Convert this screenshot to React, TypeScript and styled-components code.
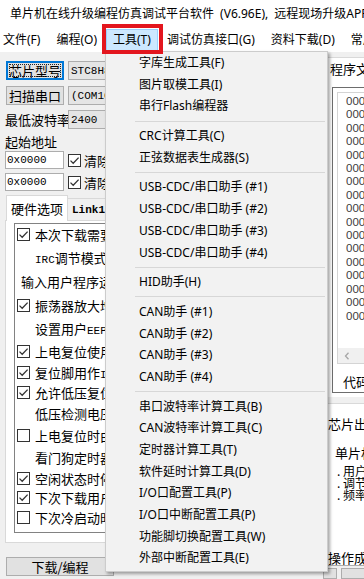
import React from "react";
import styled, { createGlobalStyle, css } from "styled-components";

const GlobalStyle = createGlobalStyle`
  html, body { margin: 0; padding: 0; }
  body { background: #f0f0f0; }
  * { box-sizing: border-box; }
`;

const UI_FONT = `"Noto Sans", "Noto Sans CJK SC", sans-serif`;
const CJK_FONT = `"Noto Sans CJK SC", "Noto Sans", sans-serif`;
const MONO_FONT = `"Liberation Mono", "Noto Sans CJK SC", monospace`;

const Window = styled.div`
  position: relative;
  width: 364px;
  height: 579px;
  overflow: hidden;
  background: #f0f0f0;
  color: #000;
  font-family: ${UI_FONT};
`;

// 标题栏
const TitleBar = styled.div`
  height: 25px;
  background: #fff;
  display: flex;
  align-items: center;
  gap: 7px;
  padding-left: 3px;
  font-size: 12px;
  white-space: nowrap;
`;

const TitleText = styled.span`
  word-spacing: 3px;
`;

// 菜单栏
const MenuBar = styled.div`
  height: 27px;
  background: #fff;
  display: flex;
  align-items: flex-start;
  padding-top: 4px;
  font-size: 12px;
  white-space: nowrap;
`;

const MenuItem = styled.div<{ $active?: boolean }>`
  position: relative;
  height: 22px;
  line-height: 20px;
  padding: 0 7px;
  border: 1px solid transparent;
  &:first-child {
    margin-left: -5px;
  }
  ${(p) =>
    p.$active &&
    css`
      background: #cce8ff;
      border-color: #99d1ff;
      padding: 0 6px;
      margin: 0 1px;
    `}
`;

const RedMark = styled.div`
  position: absolute;
  left: -5px;
  right: -6px;
  top: -6px;
  bottom: -4px;
  border: 4px solid #e3161e;
  z-index: 20;
`;

// 下拉菜单
const Dropdown = styled.div`
  position: absolute;
  left: 105px;
  top: 51px;
  width: 223px;
  padding-bottom: 2px;
  background: #f2f2f2;
  border: 1px solid #cccccc;
  box-shadow: 2px 2px 3px rgba(0, 0, 0, 0.35);
  z-index: 10;
  font-size: 12px;
  font-family: ${UI_FONT};
  white-space: nowrap;
`;

const DropItem = styled.div`
  height: 21.7px;
  line-height: 21.7px;
  padding-left: 33px;
`;

const DropSep = styled.div`
  height: 8px;
  display: flex;
  align-items: center;
  padding: 0 2px 0 29px;
  &::after {
    content: "";
    flex: 1;
    height: 1px;
    background: #d7d7d7;
  }
`;

const Body = styled.div`
  display: flex;
  height: 527px;
`;

// 左侧面板
const LeftPanel = styled.div`
  width: 323px;
  flex-shrink: 0;
  padding-left: 5px;
  overflow: hidden;
  white-space: nowrap;
  font-size: 13px;
  font-family: ${CJK_FONT};
  display: flex;
  flex-direction: column;
`;

const FormRow = styled.div<{ $mt: number; $h?: number }>`
  display: flex;
  align-items: center;
  gap: 4px;
  height: ${(p) => p.$h ?? 19}px;
  margin-top: ${(p) => p.$mt}px;
  flex-shrink: 0;
`;

const PushButton = styled.div<{ $w: number; $focus?: boolean }>`
  width: ${(p) => p.$w}px;
  height: 100%;
  flex-shrink: 0;
  margin-left: 1px;
  display: flex;
  align-items: center;
  justify-content: center;
  background: #e1e1e1;
  border: 1px solid #adadad;
  font-size: 13px;
  line-height: 1;
  ${(p) =>
    p.$focus &&
    css`
      border-color: #0078d7;
      box-shadow: inset 0 0 0 1px #0078d7;
      outline: 1px dotted #222;
      outline-offset: -4px;
    `}
`;

const Combo = styled.div`
  width: 230px;
  height: 100%;
  flex-shrink: 0;
  display: flex;
  align-items: center;
  padding-left: 2px;
  background: #e5e5e5;
  border: 1px solid #adadad;
  font-family: ${MONO_FONT};
  font-size: 11px;
`;

const FieldLabel = styled.div<{ $w?: number }>`
  width: ${(p) => (p.$w ? `${p.$w}px` : "auto")};
  flex-shrink: 0;
  line-height: 18px;
`;

const BlockLabel = styled.div`
  height: 18px;
  line-height: 18px;
  margin-top: 4px;
  flex-shrink: 0;
`;

const TextInput = styled.div`
  width: 59px;
  height: 100%;
  flex-shrink: 0;
  display: flex;
  align-items: center;
  padding-left: 1px;
  background: #fff;
  border: 1px solid #adadad;
  font-family: ${MONO_FONT};
  font-size: 11px;
`;

const CheckWrap = styled.span`
  display: inline-flex;
  align-items: center;
  gap: 3px;
`;

const CheckBox = styled.span`
  width: 13px;
  height: 13px;
  flex-shrink: 0;
  display: inline-flex;
  align-items: center;
  justify-content: center;
  background: #fff;
  border: 1px solid #333;
`;

const Ascii = styled.span`
  font-family: ${MONO_FONT};
  font-size: 11px;
`;

const TabStrip = styled.div`
  height: 25px;
  margin-top: 4px;
  display: flex;
  align-items: flex-end;
  flex-shrink: 0;
`;

const Tab = styled.div<{ $selected?: boolean }>`
  position: relative;
  display: flex;
  align-items: center;
  justify-content: center;
  border: 1px solid #d9d9d9;
  border-bottom: none;
  ${(p) =>
    p.$selected
      ? css`
          width: 62px;
          height: 26px;
          margin: 0 0 -1px 1px;
          background: #fff;
          z-index: 1;
        `
      : css`
          height: 22px;
          padding: 0 4px;
          margin-left: -1px;
          background: #f0f0f0;
          font-family: ${MONO_FONT};
          font-weight: bold;
          font-size: 11px;
        `}
`;

const TabPage = styled.div`
  width: 330px;
  height: 323px;
  flex-shrink: 0;
  padding: 2px 0 0 8px;
  background: #fff;
  border: 1px solid #d9d9d9;
`;

const OptionList = styled.div`
  width: 330px;
  height: 310px;
  padding-left: 2px;
  display: flex;
  flex-direction: column;
  border: 1px solid #828282;
  background: #fff;
`;

const OptionRow = styled.div<{ $h: number; $indent: number }>`
  height: ${(p) => p.$h}px;
  flex-shrink: 0;
  display: flex;
  align-items: center;
  gap: 5px;
  padding-left: ${(p) => p.$indent}px;
`;

// 右侧面板
const RightPanel = styled.div`
  flex: 1;
  min-width: 0;
  overflow: hidden;
  white-space: nowrap;
  padding-top: 5px;
  display: flex;
  flex-direction: column;
  font-family: ${CJK_FONT};
  font-size: 13px;
`;

const RTabStrip = styled.div`
  height: 23px;
  padding-left: 3px;
  display: flex;
  align-items: flex-end;
  flex-shrink: 0;
`;

const RTab = styled.div`
  position: relative;
  z-index: 1;
  width: 80px;
  height: 24px;
  margin-bottom: -1px;
  padding-left: 3px;
  line-height: 22px;
  background: #fff;
  border: 1px solid #d9d9d9;
  border-bottom: none;
`;

const RTabPage = styled.div`
  height: 317px;
  margin-left: 3px;
  padding: 6px 0 0 5px;
  flex-shrink: 0;
  background: #fff;
  border-top: 1px solid #d9d9d9;
  border-left: 1px solid #d9d9d9;
`;

const OuterFrame = styled.div`
  height: 306px;
  padding: 4px 0 0 4px;
  background: #fff;
  border: 1px solid #6d6d6d;
  border-right: none;
`;

const HexList = styled.div`
  height: 272px;
  display: flex;
  flex-direction: column;
  border: 1px solid #d4d4d4;
  border-right: none;
`;

const HexLines = styled.div`
  flex: 1;
  padding: 2px 0 0 8px;
  font-family: "Liberation Sans", sans-serif;
  font-size: 11.5px;
  line-height: 13.4px;
  color: #404040;
`;

const HScroll = styled.div`
  height: 15px;
  flex-shrink: 0;
  display: flex;
  align-items: center;
  padding-left: 6px;
  background: #f0f0f0;
`;

const CodeLabel = styled.div`
  margin-top: 10px;
  padding-left: 6px;
  line-height: 16px;
`;

const InfoArea = styled.div`
  height: 163px;
  margin-top: 6px;
  flex-shrink: 0;
  display: flex;
  flex-direction: column;
  background: #fff;
  border-top: 1px solid #d9d9d9;
  border-bottom: 1px solid #adadad;
`;

const InfoLine = styled.div<{ $mt: number; $indent: number; $lh: number; $small?: boolean }>`
  margin-top: ${(p) => p.$mt}px;
  padding-left: ${(p) => p.$indent}px;
  line-height: ${(p) => p.$lh}px;
  font-size: ${(p) => (p.$small ? 12 : 13)}px;
`;

const RBottom = styled.div`
  display: flex;
  gap: 4px;
  margin-top: 2px;
  height: 14px;
`;

const SmallBox = styled.div<{ $w: number }>`
  width: ${(p) => p.$w}px;
  flex-shrink: 0;
  background: #e1e1e1;
  border: 1px solid #adadad;
`;

function AppIcon() {
  const arc = (r: number) => `M1 ${13 - r} A${r} ${r} 0 0 1 ${1 + r} 13`;
  return (
    <svg width="14" height="14" viewBox="0 0 14 14">
      <path d={arc(12)} stroke="#e8335a" strokeWidth="1.8" fill="none" />
      <path d={arc(9)} stroke="#e8335a" strokeWidth="1.8" fill="none" />
      <path d={arc(6)} stroke="#5a3fc8" strokeWidth="1.8" fill="none" />
      <path d={arc(3)} stroke="#2f4fd8" strokeWidth="1.8" fill="none" />
      <rect x="0" y="11" width="3" height="3" fill="#2f4fd8" />
    </svg>
  );
}

function Check({ on }: { on: boolean }) {
  return (
    <CheckBox>
      {on && (
        <svg width="11" height="11" viewBox="0 0 11 11">
          <path d="M1.5 5.6 L4.2 8.3 L9.6 2.6" stroke="#333" strokeWidth="1.3" fill="none" />
        </svg>
      )}
    </CheckBox>
  );
}

function ChevronLeft() {
  return (
    <svg width="6" height="8" viewBox="0 0 6 8">
      <path d="M4.5 0.8 L1.5 4 L4.5 7.2" stroke="#a6a6a6" strokeWidth="1.3" fill="none" />
    </svg>
  );
}

const menus = ["文件(F)", "编程(O)", "工具(T)", "调试仿真接口(G)", "资料下载(D)", "常用"];

const toolEntries: (string | null)[] = [
  "字库生成工具(F)",
  "图片取模工具(I)",
  "串行Flash编程器",
  null,
  "CRC计算工具(C)",
  "正弦数据表生成器(S)",
  null,
  "USB-CDC/串口助手 (#1)",
  "USB-CDC/串口助手 (#2)",
  "USB-CDC/串口助手 (#3)",
  "USB-CDC/串口助手 (#4)",
  null,
  "HID助手(H)",
  null,
  "CAN助手 (#1)",
  "CAN助手 (#2)",
  "CAN助手 (#3)",
  "CAN助手 (#4)",
  null,
  "串口波特率计算工具(B)",
  "CAN波特率计算工具(C)",
  "定时器计算工具(T)",
  "软件延时计算工具(D)",
  "I/O口配置工具(P)",
  "I/O口中断配置工具(P)",
  "功能脚切换配置工具(W)",
  "外部中断配置工具(E)",
];

type Option = { text: React.ReactNode; check?: boolean; indent: number; h: number };

const options: Option[] = [
  { text: "本次下载需要修改的硬件选项", check: true, indent: 0, h: 21 },
  { text: <><Ascii>IRC</Ascii>调节模式</>, indent: 18, h: 24 },
  { text: <>输入用户程序运行时的<Ascii>IRC</Ascii>频率</>, indent: 4, h: 24 },
  { text: "振荡器放大增益(12M以上建议选择)", check: true, indent: 0, h: 24 },
  { text: <>设置用户<Ascii>EEPROM</Ascii>大小</>, indent: 18, h: 23 },
  { text: "上电复位使用较长延时", check: true, indent: 0, h: 22 },
  { text: <>复位脚用作<Ascii>I/O</Ascii>口</>, check: true, indent: 0, h: 20 },
  { text: "允许低压复位(禁止低压中断)", check: true, indent: 0, h: 20 },
  { text: "低压检测电压", indent: 18, h: 22 },
  { text: "上电复位时由硬件自动启动看门狗", check: false, indent: 0, h: 22 },
  { text: "看门狗定时器分频系数", indent: 18, h: 22 },
  { text: "空闲状态时停止看门狗计数", check: true, indent: 0, h: 20 },
  { text: "下次下载用户程序时擦除用户EEPROM区", check: true, indent: 0, h: 19 },
  { text: "下次冷启动时，P3.2/P3.3为0/0才可下载程序", check: false, indent: 0, h: 20 },
];

const hexLines = Array.from({ length: 17 }, (_, i) => {
  const addr = (i * 16).toString(16).toUpperCase().padStart(6, "0");
  return `${addr}h: FF FF FF FF FF FF FF FF`;
});

export default function App() {
  return (
    <Window>
      <GlobalStyle />
      <TitleBar>
        <AppIcon />
        <TitleText>单片机在线升级编程仿真调试平台软件 (V6.96E), 远程现场升级APP</TitleText>
      </TitleBar>
      <MenuBar>
        {menus.map((m) => (
          <MenuItem key={m} $active={m === "工具(T)"}>
            {m}
            {m === "工具(T)" && <RedMark />}
          </MenuItem>
        ))}
      </MenuBar>

      <Body>
        <LeftPanel>
          <FormRow $mt={9}>
            <PushButton $w={58} $focus>芯片型号</PushButton>
            <Combo>STC8H8K64U</Combo>
          </FormRow>
          <FormRow $mt={6}>
            <PushButton $w={58}>扫描串口</PushButton>
            <Combo>(COM10) USB-SERIAL</Combo>
          </FormRow>
          <FormRow $mt={5}>
            <FieldLabel $w={59}>最低波特率</FieldLabel>
            <Combo>2400</Combo>
          </FormRow>
          <BlockLabel>起始地址</BlockLabel>
          <FormRow $mt={0} $h={18}>
            <TextInput>0x0000</TextInput>
            <CheckWrap>
              <Check on />
              清除代码缓冲区
            </CheckWrap>
          </FormRow>
          <FormRow $mt={4} $h={18}>
            <TextInput>0x0000</TextInput>
            <CheckWrap>
              <Check on />
              清除EEPROM缓冲区
            </CheckWrap>
          </FormRow>
          <TabStrip>
            <Tab $selected>硬件选项</Tab>
            <Tab>Link1</Tab>
          </TabStrip>
          <TabPage>
            <OptionList>
              {options.map((o, i) => (
                <OptionRow key={i} $h={o.h} $indent={o.indent}>
                  {o.check !== undefined && <Check on={o.check} />}
                  <span>{o.text}</span>
                </OptionRow>
              ))}
            </OptionList>
          </TabPage>
          <FormRow $mt={14}>
            <PushButton $w={108}>下载/编程</PushButton>
          </FormRow>
        </LeftPanel>

        <RightPanel>
          <RTabStrip>
            <RTab>程序文件</RTab>
          </RTabStrip>
          <RTabPage>
            <OuterFrame>
              <HexList>
                <HexLines>
                  {hexLines.map((l) => (
                    <div key={l}>{l}</div>
                  ))}
                </HexLines>
                <HScroll>
                  <ChevronLeft />
                </HScroll>
              </HexList>
              <CodeLabel>代码校验和</CodeLabel>
            </OuterFrame>
          </RTabPage>
          <InfoArea>
            <InfoLine $mt={12} $indent={5} $lh={16}>芯片出厂序号</InfoLine>
            <InfoLine $mt={13} $indent={12} $lh={16}>单片机型号</InfoLine>
            <InfoLine $mt={4} $indent={14} $lh={12} $small>. 用户程序</InfoLine>
            <InfoLine $mt={0} $indent={14} $lh={12} $small>. 调节频率</InfoLine>
            <InfoLine $mt={0} $indent={14} $lh={12} $small>. 频率误差</InfoLine>
            <InfoLine $mt={49} $indent={5} $lh={16}>操作成功 !</InfoLine>
          </InfoArea>
          <RBottom>
            <SmallBox $w={14} />
            <SmallBox $w={40} />
          </RBottom>
        </RightPanel>
      </Body>

      <Dropdown>
        {toolEntries.map((e, i) => (e === null ? <DropSep key={i} /> : <DropItem key={i}>{e}</DropItem>))}
      </Dropdown>
    </Window>
  );
}
